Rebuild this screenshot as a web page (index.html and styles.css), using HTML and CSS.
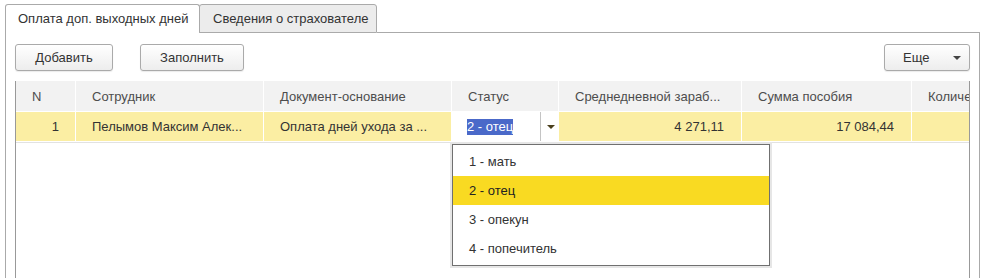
FILE: index.html
```html
<!DOCTYPE html>
<html lang="ru">

<head>
	<meta charset="UTF-8">
	<meta name="viewport" content="width=device-width, initial-scale=1.0">
	<title>Оплата доп. выходных дней</title>
	<link rel="stylesheet" href="styles.css">
</head>

<body>

	<div class="tabs">
		<div class="tab tab-active">Оплата доп. выходных дней</div>
		<div class="tab tab-other">Сведения о страхователе</div>
		<div class="tab-filler"></div>
	</div>

	<div class="panel">
		<div class="toolbar">
			<button class="btn btn-add">Добавить</button>
			<button class="btn btn-fill">Заполнить</button>
			<button class="btn btn-more">Еще <span class="caret"></span></button>
		</div>

		<div class="grid">
			<div class="grid-head">
				<div class="cell">N</div>
				<div class="cell">Сотрудник</div>
				<div class="cell">Документ-основание</div>
				<div class="cell">Статус</div>
				<div class="cell">Среднедневной зараб...</div>
				<div class="cell">Сумма пособия</div>
				<div class="cell">Количество дней</div>
			</div>
			<div class="grid-row">
				<div class="cell num">1</div>
				<div class="cell">Пелымов Максим Алек...</div>
				<div class="cell">Оплата дней ухода за ...</div>
				<div class="cell status">
					<span class="status-input"><span class="selected-text">2 - отец</span></span>
					<span class="status-drop"><span class="caret"></span></span>
				</div>
				<div class="cell num">4 271,11</div>
				<div class="cell num">17 084,44</div>
				<div class="cell num"></div>
			</div>

			<!-- open list of the status field -->
			<ul class="dropdown">
				<li>1 - мать</li>
				<li class="current">2 - отец</li>
				<li>3 - опекун</li>
				<li>4 - попечитель</li>
			</ul>
		</div>
	</div>

</body>

</html>
```

FILE: styles.css
```css
html,
body {
	margin: 0;
	height: 100%;
	overflow: hidden;
}

body {
	background-color: #fff;
	font-family: "Liberation Sans", Arial, sans-serif;
	font-size: 13px;
	color: #333;
}

/* Tabs */

.tabs {
	display: flex;
	padding: 4px 0 0 5px;
	margin-right: 8px;
}

.tab {
	box-sizing: border-box;
	height: 29px;
	line-height: 27px;
	padding-left: 12px;
	border: 1px solid #aaa;
	border-bottom: none;
	border-radius: 3px 3px 0 0;
	white-space: nowrap;
}

.tab-active {
	width: 195px;
	background-color: #fff;
}

.tab-other {
	width: 178px;
	margin-left: -1px;
	padding-left: 13px;
	background-color: #ececec;
	border-bottom: 1px solid #aaa;
}

.tab-filler {
	flex: 1;
	border-bottom: 1px solid #aaa;
}

/* Panel */

.panel {
	margin: 0 8px 0 5px;
	padding: 11px 9px 0 9px;
	height: 400px;
	border-left: 1px solid #aaa;
	border-right: 1px solid #aaa;
}

.toolbar {
	display: flex;
	height: 27px;
}

.btn {
	box-sizing: border-box;
	height: 27px;
	margin: 0;
	padding: 0;
	font-family: inherit;
	font-size: 13px;
	color: #333;
	background: linear-gradient(#fff, #ededed);
	border: 1px solid #aaa;
	border-radius: 3px;
	box-shadow: 0 1px 1px rgba(0, 0, 0, 0.08);
}

.btn-add {
	width: 98px;
}

.btn-fill {
	width: 104px;
	margin-left: 27px;
}

.btn-more {
	width: 86px;
	margin-left: auto;
	display: flex;
	align-items: center;
	padding-left: 18px;
}

.btn-more .caret {
	margin-left: 24px;
}

.caret {
	display: inline-block;
	width: 0;
	height: 0;
	border-left: 4px solid transparent;
	border-right: 4px solid transparent;
	border-top: 4px solid #444;
}

/* Table */

.grid {
	position: relative;
	margin-top: 10px;
	height: 300px;
	overflow: hidden;
	border-left: 1px solid #999;
	border-right: 1px solid #999;
}

.grid-head,
.grid-row {
	display: grid;
	grid-template-columns: 59px 188px 188px 107px 183px 170px 200px;
}

.grid-head {
	height: 30px;
	background-color: #f2f2f2;
	border-bottom: 1px solid #fff;
	color: #4d4d4d;
}

.grid-row {
	height: 29px;
	background-color: #fbeea3;
	border-bottom: 1px solid #fff;
	box-shadow: 0 1px 0 #e2e2e2;
}

.cell {
	box-sizing: border-box;
	display: flex;
	align-items: center;
	padding: 0 16px;
	border-left: 1px solid #fff;
	white-space: nowrap;
	overflow: hidden;
}

.cell:first-child {
	border-left: none;
}

.cell.num {
	justify-content: flex-end;
}

.cell.num:nth-child(5),
.cell.num:nth-child(6) {
	padding-right: 17px;
}

/* Status field in edit mode */

.cell.status {
	padding: 0;
	background-color: #fff;
}

.status-input {
	flex: 1;
	padding-left: 15px;
	height: 100%;
	display: flex;
	align-items: center;
	border-right: 1px solid #c4c4c4;
}

.selected-text {
	background-color: #4a69c9;
	color: #fff;
	line-height: 16px;
}

.status-drop {
	width: 17px;
	display: flex;
	justify-content: center;
	align-items: center;
}

.status-drop .caret {
	border-top-color: #4a3f1c;
	margin-left: 2px;
}

/* Dropdown list */

.dropdown {
	position: absolute;
	left: 436px;
	top: 63px;
	width: 318px;
	box-sizing: border-box;
	margin: 0;
	padding: 2px 0;
	list-style: none;
	background-color: #fff;
	border: 1px solid #707070;
	box-shadow: 0 0 0 2px #e6e6e6;
}

.dropdown li {
	height: 29px;
	line-height: 29px;
	padding-left: 16px;
}

.dropdown .current {
	background-color: #f9da22;
	color: #222;
}
```
